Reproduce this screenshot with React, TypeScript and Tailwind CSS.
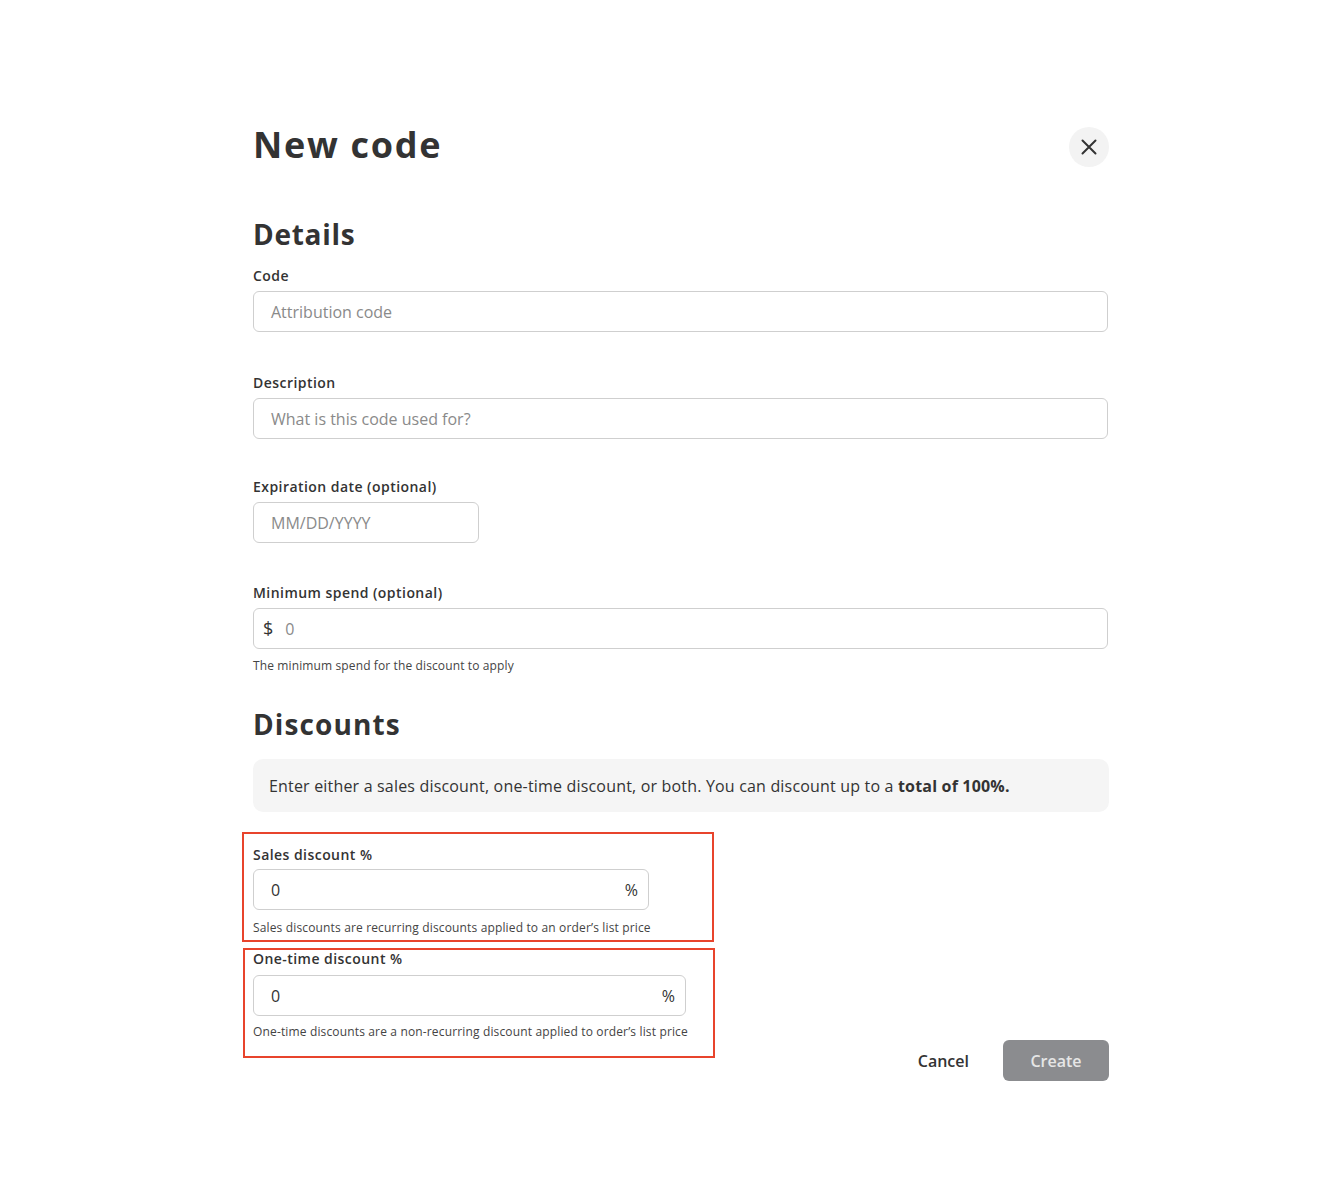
import React from "react";

const body = { fontFamily: '"Open Sans", "Noto Sans", sans-serif' };

function Label({ children }: { children: React.ReactNode }) {
  return <div className="text-[14px] leading-[20px] font-semibold text-[#333] tracking-[0.45px]">{children}</div>;
}

function TextInput({ placeholder, className = "" }: { placeholder: string; className?: string }) {
  return (
    <div className={`mt-[5px] h-[41px] rounded-[6px] border border-[#cfcfcf] bg-white flex items-center px-[17px] ${className}`}>
      <span className="text-[16px] text-[#8a8a8a]">{placeholder}</span>
    </div>
  );
}

export default function App() {
  return (
    <div className="min-h-[1180px] bg-white text-[#333]" style={body}>
      <div className="pl-[253px] pt-[123px] w-[1109px] box-content">
        <div className="w-[856px]">
          <div className="flex items-center justify-between">
            <h1 className="text-[36px] leading-[40px] font-bold tracking-[1.7px] text-[#333]">
              New code
            </h1>
            <button className="w-[40px] h-[40px] rounded-full bg-[#f3f3f3] flex items-center justify-center mt-[4px]">
              <svg width="18" height="18" viewBox="0 0 18 18" fill="none" stroke="#333" strokeWidth="2" strokeLinecap="round">
                <path d="M2.5 2.5 L15.5 15.5 M15.5 2.5 L2.5 15.5" />
              </svg>
            </button>
          </div>

          <h2 className="mt-[49px] text-[28px] leading-[36px] font-bold text-[#333] tracking-[0.7px]">Details</h2>

          <div className="mt-[14px]">
            <Label>Code</Label>
            <TextInput placeholder="Attribution code" className="w-[855px]" />
          </div>
          <div className="mt-[41px]">
            <Label>Description</Label>
            <TextInput placeholder="What is this code used for?" className="w-[855px]" />
          </div>
          <div className="mt-[38px]">
            <Label>Expiration date (optional)</Label>
            <TextInput placeholder="MM/DD/YYYY" className="w-[226px]" />
          </div>
          <div className="mt-[40px]">
            <Label>Minimum spend (optional)</Label>
            <div className="mt-[5px] h-[41px] w-[855px] rounded-[6px] border border-[#cfcfcf] bg-white flex items-center pl-[9px]">
              <span className="text-[18px] text-[#333]">$</span>
              <span className="ml-[12px] text-[16px] text-[#8a8a8a]">0</span>
            </div>
            <div className="mt-[9px] text-[12px] leading-[16px] text-[#444] tracking-[0.12px]">The minimum spend for the discount to apply</div>
          </div>

          <h2 className="mt-[32px] text-[28px] leading-[36px] font-bold text-[#333] tracking-[1.1px]">Discounts</h2>

          <div className="mt-[17px] h-[53px] rounded-[10px] bg-[#f5f5f5] flex items-center px-[16px] text-[16px] text-[#333] tracking-[0.18px]">
            <span>
              Enter either a sales discount, one-time discount, or both. You can discount up to a <b className="font-bold">total of 100%.</b>
            </span>
          </div>

          <div className="relative mt-[33px]">
            <div className="absolute -left-[11px] -top-[13px] w-[472px] h-[110px] border-2 border-[#e8442c] pointer-events-none" />
            <Label>Sales discount %</Label>
            <div className="mt-[4px] h-[41px] w-[396px] rounded-[6px] border border-[#cfcfcf] bg-white flex items-center justify-between pl-[17px] pr-[10px]">
              <span className="text-[16px] text-[#333]">0</span>
              <span className="text-[16px] text-[#333]">%</span>
            </div>
            <div className="mt-[10px] text-[12px] leading-[16px] text-[#444] tracking-[0.15px]">Sales discounts are recurring discounts applied to an order’s list price</div>
          </div>

          <div className="relative mt-[13px]">
            <div className="absolute -left-[10px] -top-[1px] w-[472px] h-[110px] border-2 border-[#e8442c] pointer-events-none" />
            <Label>One-time discount %</Label>
            <div className="mt-[6px] h-[41px] w-[433px] rounded-[6px] border border-[#cfcfcf] bg-white flex items-center justify-between pl-[17px] pr-[10px]">
              <span className="text-[16px] text-[#333]">0</span>
              <span className="text-[16px] text-[#333]">%</span>
            </div>
            <div className="mt-[8px] text-[12px] leading-[16px] text-[#444] tracking-[0.15px]">One-time discounts are a non-recurring discount applied to order’s list price</div>
          </div>

          <div className="flex justify-end items-center">
            <button className="text-[16px] font-semibold text-[#333] mr-[34px]">Cancel</button>
            <button className="h-[41px] w-[106px] rounded-[6px] bg-[#8b8c8f] text-[16px] font-semibold text-[#e6e6e6]">Create</button>
          </div>
        </div>
      </div>
    </div>
  );
}
